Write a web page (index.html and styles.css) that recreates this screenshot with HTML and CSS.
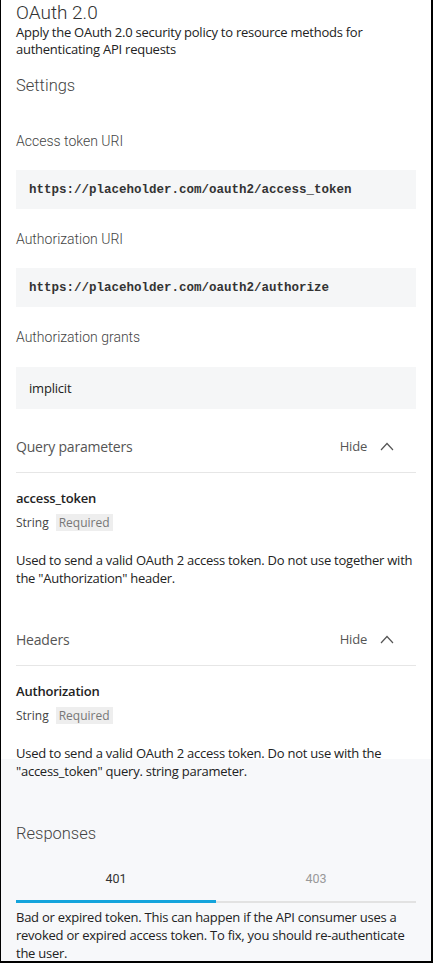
FILE: index.html
```html
<!DOCTYPE html>
<html lang="en">
<head>
<meta charset="utf-8">
<title>OAuth 2.0</title>
<link rel="stylesheet" href="styles.css">
</head>
<body>
<div class="page">
  <header class="intro">
    <h1 class="title">OAuth 2.0</h1>
    <p class="lead">Apply the OAuth 2.0 security policy to resource methods for authenticating API requests</p>
  </header>

  <h2 class="section-title settings-title">Settings</h2>

  <div class="field">
    <div class="field-label">Access token URI</div>
    <div class="field-value mono">https://placeholder.com/oauth2/access_token</div>
  </div>
  <div class="field">
    <div class="field-label">Authorization URI</div>
    <div class="field-value mono">https://placeholder.com/oauth2/authorize</div>
  </div>
  <div class="field">
    <div class="field-label">Authorization grants</div>
    <div class="field-value plain">implicit</div>
  </div>

  <section class="group group-query">
    <div class="group-head">
      <span class="group-title">Query parameters</span>
      <span class="toggle">Hide
        <svg class="chev" width="14" height="9" viewBox="0 0 14 9"><polyline points="1,8 7,1.5 13,8" fill="none" stroke="#555" stroke-width="1.2"/></svg>
      </span>
    </div>
    <div class="param">
      <div class="param-name">access_token</div>
      <div class="param-meta"><span class="type">String</span><span class="badge">Required</span></div>
      <p class="param-desc">Used to send a valid OAuth 2 access token. Do not use together with the "Authorization" header.</p>
    </div>
  </section>

  <section class="group group-headers">
    <div class="group-head">
      <span class="group-title">Headers</span>
      <span class="toggle">Hide
        <svg class="chev" width="14" height="9" viewBox="0 0 14 9"><polyline points="1,8 7,1.5 13,8" fill="none" stroke="#555" stroke-width="1.2"/></svg>
      </span>
    </div>
    <div class="param">
      <div class="param-name">Authorization</div>
      <div class="param-meta"><span class="type">String</span><span class="badge">Required</span></div>
      <p class="param-desc">Used to send a valid OAuth 2 access token. Do not use with the "access_token" query. string parameter.</p>
    </div>
  </section>

  <section class="responses">
    <h2 class="section-title">Responses</h2>
    <div class="tabs">
      <div class="tab active">401</div>
      <div class="tab">403</div>
    </div>
    <p class="resp-desc">Bad or expired token. This can happen if the API consumer uses a revoked or expired access token. To fix, you should re-authenticate the user.</p>
  </section>
</div>
</body>
</html>
```

FILE: styles.css
```css
* { box-sizing: border-box; }
html, body { margin: 0; padding: 0; background: #fff; }
body { font-family: "Open Sans", "Noto Sans", sans-serif; color: #222; }

.page {
  height: 963px;
  overflow: hidden;
  border-left: 1px solid #000;
  border-right: 2px solid #000;
  border-bottom: 2px solid #000;
  padding: 0 15px;
  background: linear-gradient(#fff 0, #fff 759px, #f7f8fa 759px, #f7f8fa 100%);
}

.title {
  margin: 0;
  padding-top: 2px;
  font-family: Roboto, sans-serif;
  font-weight: 300;
  font-size: 19px;
  line-height: 22px;
  color: #333;
}
.lead {
  margin: 0;
  font-size: 13px;
  letter-spacing: -0.25px;
  line-height: 17px;
  color: #222;
}

.section-title {
  margin: 0;
  font-family: Roboto, sans-serif;
  font-weight: 300;
  font-size: 16.5px;
  line-height: 20px;
  color: #444;
}
.settings-title { margin-top: 18px; }

.field { margin-top: 35px; }
.field + .field { margin-top: 20px; }
.field-label {
  font-family: Roboto, sans-serif;
  font-weight: 300;
  font-size: 14px;
  line-height: 20px;
  color: #444;
}
.field-value {
  margin-top: 19px;
  background: #f5f6f7;
  padding: 0 13px;
  color: #222;
}
.field-value.mono {
  height: 39px;
  display: flex;
  align-items: center;
  font-family: "Liberation Mono", monospace;
  font-weight: 700;
  font-size: 12.5px;
  color: #333;
}
.field-value.plain {
  margin-top: 20px;
  height: 42px;
  display: flex;
  align-items: center;
  font-size: 13px;
  letter-spacing: -0.2px;
}

.group-query { margin-top: 27px; }
.group-headers { margin-top: 42px; }
.group-head {
  display: flex;
  justify-content: space-between;
  align-items: center;
  height: 20px;
  box-sizing: content-box;
  padding-bottom: 16px;
  border-bottom: 1px solid #e6e6e6;
}
.group-title {
  font-family: "Open Sans", sans-serif;
  font-size: 14px;
  letter-spacing: -0.2px;
  color: #555;
}
.toggle {
  display: flex;
  align-items: center;
  gap: 13px;
  padding-right: 22px;
  font-size: 13px;
  letter-spacing: -0.2px;
  color: #555;
}
.chev { display: block; }

.param { padding-top: 15px; }
.param-name {
  font-weight: 600;
  font-size: 13px;
  letter-spacing: -0.2px;
  line-height: 20px;
  color: #222;
}
.param-meta {
  margin-top: 6px;
  display: flex;
  align-items: center;
  gap: 7px;
  height: 17px;
  font-size: 12px;
}
.type { color: #444; }
.badge {
  background: #eee;
  color: #777;
  padding: 0 3px;
  line-height: 17px;
}
.param-desc {
  margin: 20px 0 0;
  font-size: 13px;
  letter-spacing: -0.25px;
  line-height: 18px;
  color: #222;
}

.responses { margin-top: 44px; }
.tabs {
  display: flex;
  margin-top: 25px;
}
.tab {
  flex: 1;
  text-align: center;
  font-family: Roboto, sans-serif;
  font-size: 12.5px;
  line-height: 20px;
  padding-bottom: 11px;
  color: #999;
  border-bottom: 2px solid #e2e2e2;
}
.tab.active {
  color: #333;
  border-bottom: 3px solid #14a4dc;
}
.resp-desc {
  margin: 5px 0 0;
  font-size: 13px;
  letter-spacing: -0.25px;
  line-height: 18px;
  color: #222;
}
```
